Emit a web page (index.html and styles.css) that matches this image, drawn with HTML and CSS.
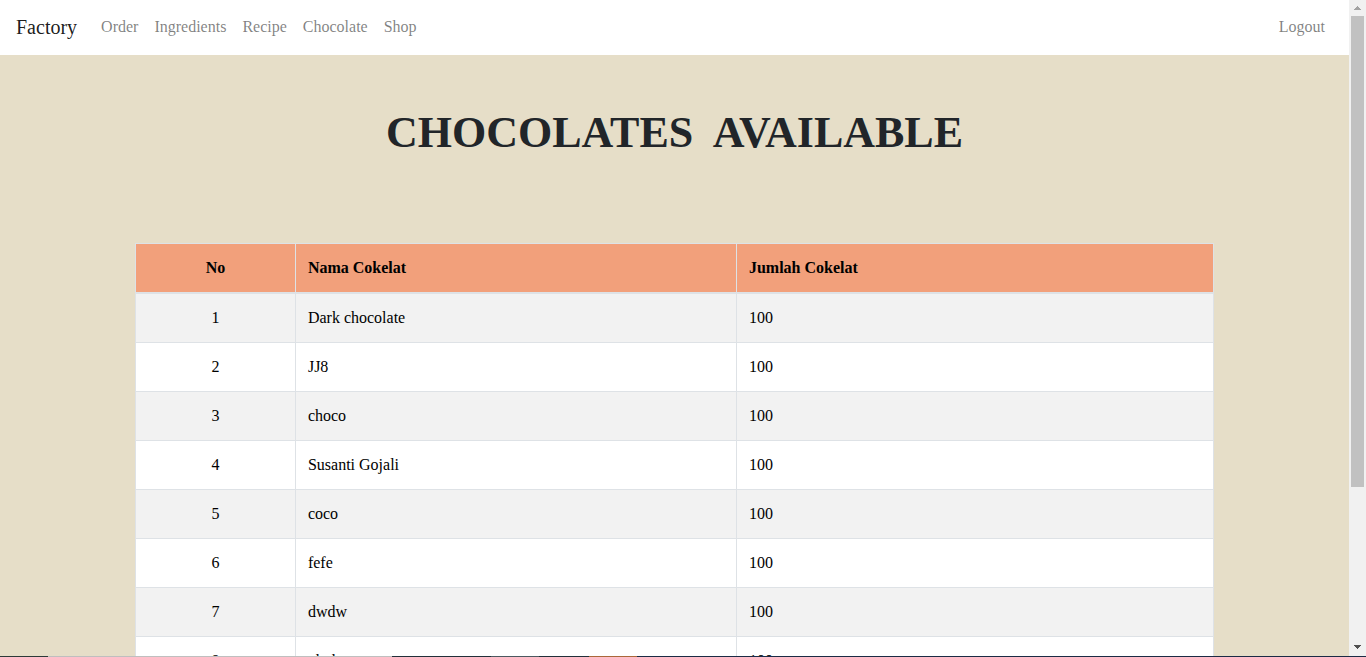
FILE: index.html
```html
<!DOCTYPE html>
<html lang="en">
<head>
<meta charset="utf-8">
<title>Chocolates Available</title>
<link rel="stylesheet" href="styles.css">
</head>
<body>
<div class="window">
  <div class="page">
    <nav class="navbar">
      <a class="brand" href="#">Factory</a>
      <ul class="nav-list">
        <li><a class="nav-link" href="#">Order</a></li>
        <li><a class="nav-link" href="#">Ingredients</a></li>
        <li><a class="nav-link" href="#">Recipe</a></li>
        <li><a class="nav-link" href="#">Chocolate</a></li>
        <li><a class="nav-link" href="#">Shop</a></li>
      </ul>
      <a class="nav-link logout" href="#">Logout</a>
    </nav>
    <main class="content">
      <h1 class="title">CHOCOLATES&nbsp; AVAILABLE</h1>
      <table class="stock">
        <colgroup><col class="col-no"><col class="col-name"><col></colgroup>
        <thead>
          <tr><th class="number" scope="col">No</th><th scope="col">Nama Cokelat</th><th scope="col">Jumlah Cokelat</th></tr>
        </thead>
        <tbody>
          <tr><td class="number">1</td><td>Dark chocolate</td><td>100</td></tr>
          <tr><td class="number">2</td><td>JJ8</td><td>100</td></tr>
          <tr><td class="number">3</td><td>choco</td><td>100</td></tr>
          <tr><td class="number">4</td><td>Susanti Gojali</td><td>100</td></tr>
          <tr><td class="number">5</td><td>coco</td><td>100</td></tr>
          <tr><td class="number">6</td><td>fefe</td><td>100</td></tr>
          <tr><td class="number">7</td><td>dwdw</td><td>100</td></tr>
          <tr><td class="number">8</td><td>nbnb</td><td>100</td></tr>
        </tbody>
      </table>
    </main>
  </div>
  <div class="scrollbar" aria-hidden="true">
    <svg class="arrow" width="17" height="16" viewBox="0 0 17 16"><path d="M5 10h7v-1h-1v-1h-1v-1h-1v-1h-1v1h-1v1h-1v1h-1z" fill="#a3a3a3"/></svg>
    <div class="track"><div class="thumb"></div></div>
    <svg class="arrow" width="17" height="17" viewBox="0 0 17 17"><path d="M5 6h7v1h-1v1h-1v1h-1v1h-1v-1h-1v-1h-1v-1h-1z" fill="#505050"/></svg>
  </div>
</div>
<div class="taskbar"></div>
</body>
</html>
```
FILE: styles.css
```css
* { box-sizing: border-box; }

body {
  margin: 0;
  height: 100vh;
  display: flex;
  flex-direction: column;
  overflow: hidden;
  font: 16px/24px "Liberation Serif", "Times New Roman", serif;
  color: #212529;
}

.window {
  flex: 1;
  min-height: 0;
  display: flex;
}

.page {
  flex: 1;
  overflow: hidden;
  background: #e6dec8;
}

.navbar {
  display: flex;
  align-items: center;
  padding: 8px 16px;
  background: #fff;
}

.brand {
  margin-right: 16px;
  padding: 4px 0 5px;
  font-size: 20px;
  line-height: 30px;
  color: rgba(0, 0, 0, 0.9);
  text-decoration: none;
}

.nav-list {
  display: flex;
  flex: 1;
  margin: 0;
  padding: 0;
  list-style: none;
}

.nav-link {
  display: block;
  padding: 7px 8px 8px;
  color: rgba(0, 0, 0, 0.5);
  text-decoration: none;
}

.content {
  width: 80%;
  margin: 0 auto;
  padding-top: 48px;
}

.title {
  margin: 0 0 80px;
  font-family: "Bodoni MT Condensed", "Liberation Serif", serif;
  font-size: 44px;
  line-height: 60px;
  font-weight: 700;
  text-align: center;
}

.stock {
  width: 100%;
  table-layout: fixed;
  border-collapse: collapse;
  color: #000;
  background: #fff;
}

.col-no { width: 160px; }
.col-name { width: 441px; }

.stock th,
.stock td {
  padding: 12px;
  border: 1px solid #dee2e6;
  text-align: left;
}

.stock th {
  background: #f2a07b;
  border-bottom-width: 2px;
}

.stock tbody tr:nth-child(odd) { background: #f2f2f2; }

.stock .number { text-align: center; }

.scrollbar {
  display: flex;
  flex-direction: column;
  width: 17px;
  background: #f1f1f1;
}

.arrow { display: block; }

.track {
  flex: 1;
  padding: 0 2px;
}

.thumb {
  height: 75.6%;
  background: #c1c1c1;
}

.taskbar {
  height: 1px;
  background: linear-gradient(to right, #2c3a38 0 48px, #bfbfbf 48px 392px, #22303a 392px 491px, #4c5960 491px 539px, #22303a 539px 589px, #a9683a 589px 637px, #1b2b45 637px);
}
```
